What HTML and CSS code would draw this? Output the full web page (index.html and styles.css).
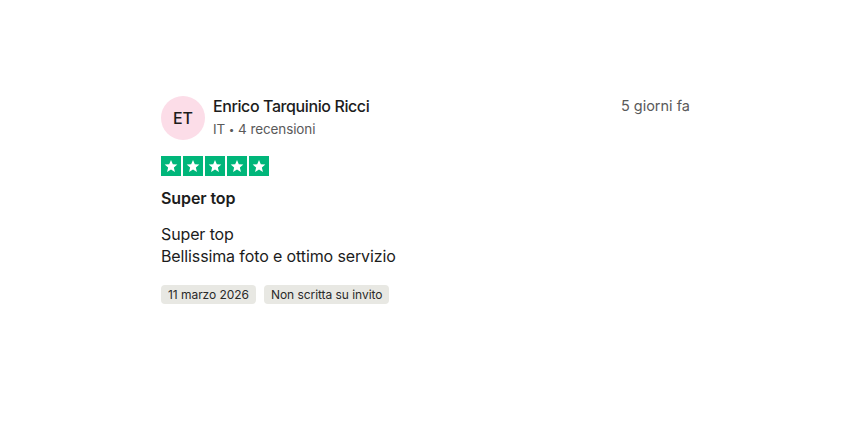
FILE: index.html
```html
<!DOCTYPE html>
<html lang="it">
<head>
  <meta charset="UTF-8" />
  <title>Recensione</title>
  <link rel="stylesheet" href="styles.css">
</head>
<body>

  <div class="recensione">
    <div class="testata">
      <div class="avatar">ET</div>
      <div class="autore">
        <div class="nome">Enrico Tarquinio Ricci</div>
        <div class="info">IT <span class="punto">•</span> 4 recensioni</div>
      </div>
      <div class="data">5 giorni fa</div>
    </div>

    <div class="stelle">
      <span class="stella"><svg viewBox="0 0 24 24"><path d="M12 3l2.7 6.3 6.8.6-5.2 4.4 1.6 6.7L12 17.4 6.1 21l1.6-6.7-5.2-4.4 6.8-.6z"/></svg></span>
      <span class="stella"><svg viewBox="0 0 24 24"><path d="M12 3l2.7 6.3 6.8.6-5.2 4.4 1.6 6.7L12 17.4 6.1 21l1.6-6.7-5.2-4.4 6.8-.6z"/></svg></span>
      <span class="stella"><svg viewBox="0 0 24 24"><path d="M12 3l2.7 6.3 6.8.6-5.2 4.4 1.6 6.7L12 17.4 6.1 21l1.6-6.7-5.2-4.4 6.8-.6z"/></svg></span>
      <span class="stella"><svg viewBox="0 0 24 24"><path d="M12 3l2.7 6.3 6.8.6-5.2 4.4 1.6 6.7L12 17.4 6.1 21l1.6-6.7-5.2-4.4 6.8-.6z"/></svg></span>
      <span class="stella"><svg viewBox="0 0 24 24"><path d="M12 3l2.7 6.3 6.8.6-5.2 4.4 1.6 6.7L12 17.4 6.1 21l1.6-6.7-5.2-4.4 6.8-.6z"/></svg></span>
    </div>

    <h2 class="titolo">Super top</h2>

    <p class="testo">Super top<br />Bellissima foto e ottimo servizio</p>

    <div class="etichette">
      <span class="etichetta">11 marzo 2026</span>
      <span class="etichetta">Non scritta su invito</span>
    </div>
  </div>

</body>
</html>
```

FILE: styles.css
```css
* { box-sizing: border-box; margin: 0; padding: 0; }

body {
  background: #ffffff;
  font-family: 'Inter', 'Noto Sans', sans-serif;
  color: #1c1c1c;
}

.recensione {
  width: 529px;
  margin: 96px 0 0 161px;
}

.testata {
  display: flex;
  align-items: flex-start;
  gap: 8px;
}

.avatar {
  width: 44px;
  height: 44px;
  border-radius: 50%;
  background: #fcdde8;
  color: #1c1c1c;
  font-size: 16px;
  font-weight: 500;
  display: flex;
  justify-content: center;
  align-items: center;
  flex-shrink: 0;
}

.autore {
  flex: 1;
}

.nome {
  font-size: 16px;
  font-weight: 500;
  line-height: 20px;
  letter-spacing: -0.4px;
}

.info {
  font-size: 13.5px;
  line-height: 20px;
  margin-top: 3px;
  color: #5a5a5a;
  letter-spacing: -0.1px;
}

.punto {
  font-size: 10px;
  vertical-align: 1px;
}

.data {
  font-size: 14.5px;
  line-height: 20px;
  color: #5a5a5a;
}

.stelle {
  display: flex;
  gap: 2px;
  margin-top: 16px;
}

.stella {
  width: 20px;
  height: 20px;
  background: #00b67a;
  display: flex;
  justify-content: center;
  align-items: center;
}

.stella svg {
  width: 16px;
  height: 16px;
  fill: #ffffff;
}

.titolo {
  font-size: 16px;
  font-weight: 600;
  line-height: 22px;
  margin-top: 11px;
  letter-spacing: -0.1px;
}

.testo {
  font-size: 16px;
  line-height: 22px;
  margin-top: 14px;
  color: #1c1c1c;
  letter-spacing: -0.12px;
}

.etichette {
  display: flex;
  gap: 8px;
  margin-top: 18px;
}

.etichetta {
  background: #e8e8e3;
  border-radius: 4px;
  font-size: 12px;
  line-height: 19px;
  padding: 0 7px;
  color: #2a2a2a;
  letter-spacing: -0.05px;
}
```
